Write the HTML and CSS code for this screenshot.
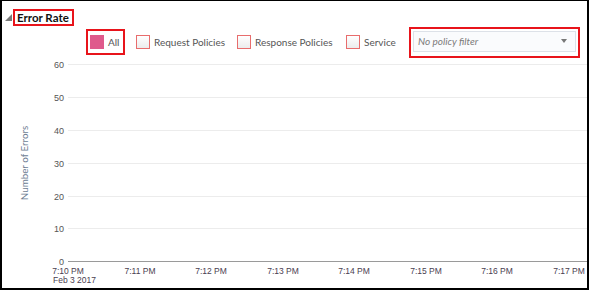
FILE: index.html
```html
<!DOCTYPE html>
<html>
<head>
<meta charset="utf-8">
<link rel="stylesheet" href="styles.css">
</head>
<body>
<div class="frame">
  <div class="title-row">
    <span class="tri"></span>
    <span class="title">Error Rate</span>
  </div>
  <div class="toolbar">
    <div class="all-box">
      <span class="chk chk-on"></span>
      <span class="lbl">All</span>
    </div>
    <div class="opt opt-req"><span class="chk"></span><span class="lbl">Request Policies</span></div>
    <div class="opt opt-resp"><span class="chk"></span><span class="lbl">Response Policies</span></div>
    <div class="opt opt-svc"><span class="chk"></span><span class="lbl">Service</span></div>
    <div class="dd-box">
      <div class="select">
        <span class="ph">No policy filter</span>
        <span class="arrow"></span>
      </div>
    </div>
  </div>
  <svg class="chart" width="585" height="230" viewBox="2 57 585 230">
    <g class="grid">
      <line x1="68" x2="587" y1="63.5" y2="63.5"/>
      <line x1="68" x2="587" y1="96.5" y2="96.5"/>
      <line x1="68" x2="587" y1="129.5" y2="129.5"/>
      <line x1="68" x2="587" y1="162.5" y2="162.5"/>
      <line x1="68" x2="587" y1="195.5" y2="195.5"/>
      <line x1="68" x2="587" y1="227.5" y2="227.5"/>
    </g>
    <line class="axis" x1="68" x2="587" y1="260.5" y2="260.5"/>
    <g class="ylab">
      <text x="64" y="66.5">60</text>
      <text x="64" y="99.5">50</text>
      <text x="64" y="132.5">40</text>
      <text x="64" y="165.5">30</text>
      <text x="64" y="198.5">20</text>
      <text x="64" y="230.5">10</text>
      <text x="64" y="263.5">0</text>
    </g>
    <text class="ytitle" transform="translate(27.5 162) rotate(-90)">Number of Errors</text>
    <g class="xlab">
      <text x="68" y="272.5">7:10 PM</text>
      <text x="140" y="272.5">7:11 PM</text>
      <text x="211" y="272.5">7:12 PM</text>
      <text x="283" y="272.5">7:13 PM</text>
      <text x="354" y="272.5">7:14 PM</text>
      <text x="426" y="272.5">7:15 PM</text>
      <text x="497" y="272.5">7:16 PM</text>
      <text x="569" y="272.5">7:17 PM</text>
    </g>
    <text class="xdate" x="53" y="281.5">Feb 3 2017</text>
  </svg>
</div>
</body>
</html>
```
FILE: styles.css
```css
html, body {
  margin: 0;
  padding: 0;
  background: #fff;
}
.frame {
  width: 589px;
  height: 290px;
  box-sizing: border-box;
  border: 2px solid #000;
  border-top-width: 1px;
  font-family: Lato, "Liberation Sans", sans-serif;
  overflow: hidden;
  display: flex;
  flex-direction: column;
}
.title-row {
  display: flex;
  align-items: flex-end;
  height: 25px;
  padding-left: 3px;
  box-sizing: border-box;
  padding-top: 8px;
}
.tri {
  width: 0;
  height: 0;
  border-style: solid;
  border-width: 0 0 7px 7px;
  border-color: transparent transparent #7a7a7a transparent;
  margin-bottom: 5px;
  margin-right: 1px;
}
.title {
  border: 2px solid #e8141b;
  font-weight: bold;
  font-size: 11.5px;
  line-height: 13px;
  padding: 0 3px 0 2px;
  color: #111;
  height: 13px;
}
.toolbar {
  display: flex;
  align-items: center;
  height: 32px;
  padding-left: 84px;
}
.all-box {
  display: flex;
  align-items: center;
  box-sizing: border-box;
  width: 39px;
  height: 26px;
  border: 2px solid #e8141b;
  padding-left: 2px;
  margin-right: 11px;
}
.chk {
  width: 14px;
  height: 14px;
  box-sizing: border-box;
  border: 1px solid #e86d6d;
  background: linear-gradient(#ffffff, #ececec);
  flex: none;
}
.chk-on {
  border: none;
  background: #df5a8c;
}
.lbl {
  font-size: 10px;
  color: #555;
  margin-left: 4px;
  white-space: nowrap;
}
.opt {
  display: flex;
  align-items: center;
}
.opt-req { width: 101px; }
.opt-resp { width: 109px; }
.opt-svc { width: 63px; }
.dd-box {
  box-sizing: border-box;
  width: 171px;
  height: 31px;
  border: 2px solid #e8141b;
  padding: 2px;
}
.select {
  box-sizing: border-box;
  height: 21px;
  border: 1px solid #dde1e8;
  background: #fafbfd;
  display: flex;
  align-items: center;
  justify-content: space-between;
  padding: 0 8px 0 4px;
}
.ph {
  font-style: italic;
  font-size: 10px;
  color: #7a7a7a;
}
.arrow {
  width: 0;
  height: 0;
  border-style: solid;
  border-width: 4px 3.5px 0 3.5px;
  border-color: #777 transparent transparent transparent;
}
.chart {
  display: block;
  flex: none;
}
.grid line {
  stroke: #ececec;
  stroke-width: 1;
}
.axis {
  stroke: #9a9a9a;
  stroke-width: 1;
}
.ylab text {
  font-family: "Liberation Sans", Arial, sans-serif;
  font-size: 9px;
  fill: #555;
  text-anchor: end;
}
.ytitle {
  font-family: Lato, "Liberation Sans", sans-serif;
  font-size: 9.8px;
  fill: #6e7d92;
  text-anchor: middle;
}
.xlab text {
  font-family: "Liberation Sans", Arial, sans-serif;
  font-size: 8.5px;
  fill: #4a4050;
  text-anchor: middle;
}
.xdate {
  font-family: "Liberation Sans", Arial, sans-serif;
  font-size: 8.5px;
  fill: #4a4050;
}
```
